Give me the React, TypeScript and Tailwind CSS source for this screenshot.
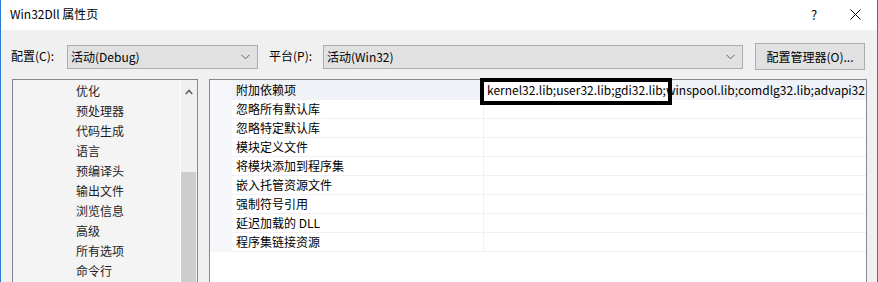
import React from 'react';

const FONT = '"Noto Sans CJK SC", "Liberation Sans", sans-serif';

const treeItems = ['优化', '预处理器', '代码生成', '语言', '预编译头', '输出文件', '浏览信息', '高级', '所有选项', '命令行'];

const props = [
  '附加依赖项',
  '忽略所有默认库',
  '忽略特定默认库',
  '模块定义文件',
  '将模块添加到程序集',
  '嵌入托管资源文件',
  '强制符号引用',
  '延迟加载的 DLL',
  '程序集链接资源',
];

function Chevron() {
  return (
    <svg width="9" height="6" viewBox="0 0 9 6" className="shrink-0">
      <path d="M0.5 0.8 L4.5 4.8 L8.5 0.8" fill="none" stroke="#606060" strokeWidth="1" />
    </svg>
  );
}

function Select({ value, className }: { value: string; className: string }) {
  return (
    <div className={`h-[24px] flex items-center justify-between bg-[#e1e1e1] border border-[#adadad] pl-[3px] pr-[7px] ${className}`}>
      <span>{value}</span>
      <Chevron />
    </div>
  );
}

export default function App() {
  return (
    <div
      className="w-[878px] h-[282px] overflow-hidden flex flex-col border-x border-[#2b7ad0] text-[12px] text-black leading-none"
      style={{ fontFamily: FONT }}
    >
      {/* title bar */}
      <div className="h-[30px] shrink-0 bg-white flex items-center">
        <span className="pl-[9px] pb-[2px]">Win32Dll 属性页</span>
        <div className="flex-1" />
        <span className="w-[20px] text-center pb-[2px] mr-[26px] text-[13px]">?</span>
        <svg width="11" height="11" viewBox="0 0 11 11" className="mr-[16px] mb-[1px]">
          <path d="M0.5 0.5 L10.5 10.5 M10.5 0.5 L0.5 10.5" stroke="#000" strokeWidth="1" />
        </svg>
      </div>

      <div className="flex-1 bg-[#f0f0f0] flex flex-col">
        {/* configuration row */}
        <div className="flex items-center h-[27px] mt-[13px] pl-[10px]">
          <span className="w-[56px] pb-[1px]">配置(C):</span>
          <Select value="活动(Debug)" className="w-[191px]" />
          <span className="ml-[11px] w-[54px] pb-[1px]">平台(P):</span>
          <Select value="活动(Win32)" className="w-[420px]" />
          <button className="ml-[12px] w-[110px] h-[27px] bg-[#e1e1e1] border border-[#adadad] flex items-center justify-center">
            配置管理器(O)...
          </button>
        </div>

        {/* panels */}
        <div className="flex-1 flex mt-[9px] pl-[11px] gap-[11px]">
          {/* tree */}
          <div className="w-[186px] border border-[#828790] border-b-0 bg-[#f4f4f4] flex">
            <div className="flex-1 pt-[1px] border-r border-white">
              {treeItems.map((item) => (
                <div key={item} className="h-[20px] flex items-center pl-[63px] text-[#1e1e1e]">
                  {item}
                </div>
              ))}
            </div>
            <div className="w-[16px] bg-[#f0f0f0] flex flex-col">
              <div className="h-[21px] flex items-center justify-center pt-[2px]">
                <svg width="8" height="6" viewBox="0 0 8 6">
                  <path d="M0.8 5 L4 1.5 L7.2 5" fill="none" stroke="#606060" strokeWidth="1.6" />
                </svg>
              </div>
              <div className="h-[71px]" />
              <div className="flex-1 w-[15px] bg-[#cdcdcd]" />
            </div>
          </div>

          {/* property grid */}
          <div className="w-[658px] border border-[#828790] border-b-0 bg-white flex flex-col">
            {props.map((name, i) => (
              <div
                key={name}
                className={`flex ${i === 0 ? 'h-[20px] bg-[#eff2f7]' : 'h-[19px]'}`}
              >
                <div className="w-[22px] shrink-0 bg-[#f5f7fb]" />
                <div className="w-[252px] shrink-0 flex items-center pl-[4px] border-b border-[#f0f0f5] border-r border-r-[#f0f0f5]">
                  {name}
                </div>
                <div className="flex-1 relative border-b border-[#f0f0f5] min-w-0">
                  {i === 0 && (
                    <>
                      <div className="absolute left-[-4px] top-[-2px] w-[192px] h-[27px] bg-white border-4 border-black" />
                      <div className="relative h-full flex items-center pl-[3px] whitespace-nowrap overflow-hidden">
                        kernel32.lib;user32.lib;gdi32.lib;winspool.lib;comdlg32.lib;advapi32.lib;shell32.lib
                      </div>
                    </>
                  )}
                </div>
              </div>
            ))}
          </div>
        </div>
      </div>
    </div>
  );
}
